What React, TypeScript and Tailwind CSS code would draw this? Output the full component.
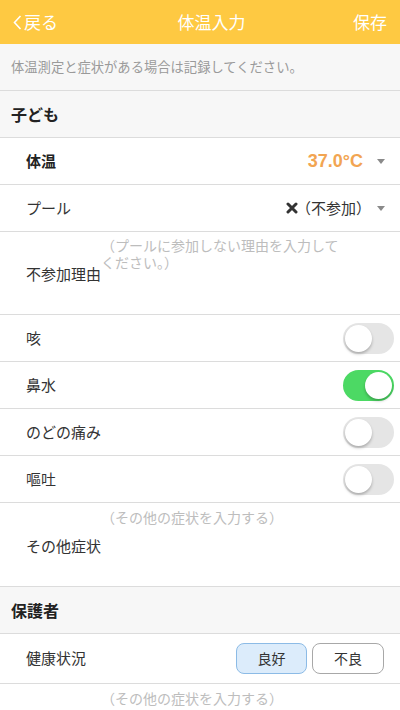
import React, { useState } from 'react';

const font = { fontFamily: '"Noto Sans CJK JP", "Noto Sans", sans-serif' };

const Caret = ({ ml = 'ml-[14px]' }: { ml?: string }) => (
  <svg width="8" height="5" viewBox="0 0 8 5" className={ml}>
    <path d="M0 0 L8 0 L4 5 Z" fill="#8a8a8a" />
  </svg>
);

const Toggle = ({ on, onClick }: { on: boolean; onClick: () => void }) => (
  <button
    onClick={onClick}
    className={`relative w-[51px] h-[31px] rounded-full border-2 transition-colors ${on ? 'bg-[#4cd964] border-[#4cd964]' : 'bg-[#e5e5e5] border-[#e5e5e5]'}`}
  >
    <span
      className={`absolute top-0 w-[27px] h-[27px] rounded-full bg-white shadow-[0_2px_3px_rgba(0,0,0,0.25)] ${on ? 'left-[20px]' : 'left-0'}`}
    />
  </button>
);

const Row = ({ children, pr = 'pr-[15px]' }: { children: React.ReactNode; pr?: string }) => (
  <div className={`flex items-center h-[47px] pl-[26px] ${pr} bg-white border-b border-[#dcdcdc]`}>{children}</div>
);

const Section = ({ title }: { title: string }) => (
  <div className="flex items-center h-[47px] px-[11px] bg-[#f7f7f7] border-b border-[#dcdcdc] text-[16px] font-bold text-[#222]">{title}</div>
);

export default function App() {
  const [symptoms, setSymptoms] = useState({ cough: false, nose: true, throat: false, vomit: false });
  const [health, setHealth] = useState<'good' | 'bad'>('good');

  const toggles: { key: keyof typeof symptoms; label: string }[] = [
    { key: 'cough', label: '咳' },
    { key: 'nose', label: '鼻水' },
    { key: 'throat', label: 'のどの痛み' },
    { key: 'vomit', label: '嘔吐' },
  ];

  return (
    <div style={font} className="w-[400px] h-[710px] overflow-hidden bg-white text-[#333]">
      <div className="flex items-center justify-between h-[44px] px-[13px] bg-[#fec942] text-white text-[17px]">
        <span className="flex items-center">
          <svg width="9" height="15" viewBox="0 0 9 15" className="mr-[2px]">
            <path d="M7.5 1 L1.5 7.5 L7.5 14" stroke="white" strokeWidth="1.6" fill="none" />
          </svg>
          戻る
        </span>
        <span className="translate-x-[6px]">体温入力</span>
        <span>保存</span>
      </div>

      <div className="flex items-center h-[47px] px-[11px] bg-[#f7f7f7] border-b border-[#dcdcdc] text-[13.3px] text-[#9a9a9a]">
        体温測定と症状がある場合は記録してください。
      </div>

      <Section title="子ども" />

      <Row>
        <span className="flex-1 text-[15px] font-bold text-[#222]">体温</span>
        <span className="text-[18px] font-bold text-[#f2a552]" style={{ fontFamily: '"Liberation Sans", Arial, sans-serif' }}>37.0°C</span>
        <Caret />
      </Row>

      <Row>
        <span className="flex-1 text-[15px]">プール</span>
        <span className="flex items-center text-[15px] text-[#333]">
          <svg width="12" height="12" viewBox="0 0 12 12" className="mr-[-2px]">
            <path d="M2 2 L10 10 M10 2 L2 10" stroke="#333" strokeWidth="3" strokeLinecap="round" />
          </svg>
          （不参加）
        </span>
        <Caret ml="ml-[6px]" />
      </Row>

      <div className="relative h-[83px] bg-white border-b border-[#dcdcdc]">
        <span className="absolute left-[26px] top-[31px] text-[15px]">不参加理由</span>
        <div className="absolute left-[101px] top-[5px] w-[240px] text-[14px] leading-[17px] text-[#bdbdbd]">
          （プールに参加しない理由を入力してください。）
        </div>
      </div>

      {toggles.map(t => (
        <Row key={t.key} pr="pr-[6px]">
          <span className="flex-1 text-[15px]">{t.label}</span>
          <Toggle on={symptoms[t.key]} onClick={() => setSymptoms(s => ({ ...s, [t.key]: !s[t.key] }))} />
        </Row>
      ))}

      <div className="relative h-[84px] bg-white border-b border-[#dcdcdc]">
        <span className="absolute left-[26px] top-[32px] text-[15px]">その他症状</span>
        <div className="absolute left-[101px] top-[4px] text-[14px] leading-[20px] text-[#bdbdbd]">（その他の症状を入力する）</div>
      </div>

      <Section title="保護者" />

      <div className="flex items-center h-[50px] pl-[26px] pr-[16px] bg-white border-b border-[#dcdcdc]">
        <span className="flex-1 text-[15px]">健康状況</span>
        <button
          onClick={() => setHealth('good')}
          className={`w-[71px] h-[31px] rounded-[8px] border text-[14px] ${health === 'good' ? 'bg-[#dcecfb] border-[#8cbbe6]' : 'bg-white border-[#a8a8a8]'}`}
        >
          良好
        </button>
        <button
          onClick={() => setHealth('bad')}
          className={`ml-[5px] w-[72px] h-[31px] rounded-[8px] border text-[14px] ${health === 'bad' ? 'bg-[#dcecfb] border-[#8cbbe6]' : 'bg-white border-[#a8a8a8]'}`}
        >
          不良
        </button>
      </div>

      <div className="relative h-[40px] bg-white">
        <div className="absolute left-[101px] top-[4px] text-[14px] leading-[20px] text-[#bdbdbd]">（その他の症状を入力する）</div>
      </div>
    </div>
  );
}
